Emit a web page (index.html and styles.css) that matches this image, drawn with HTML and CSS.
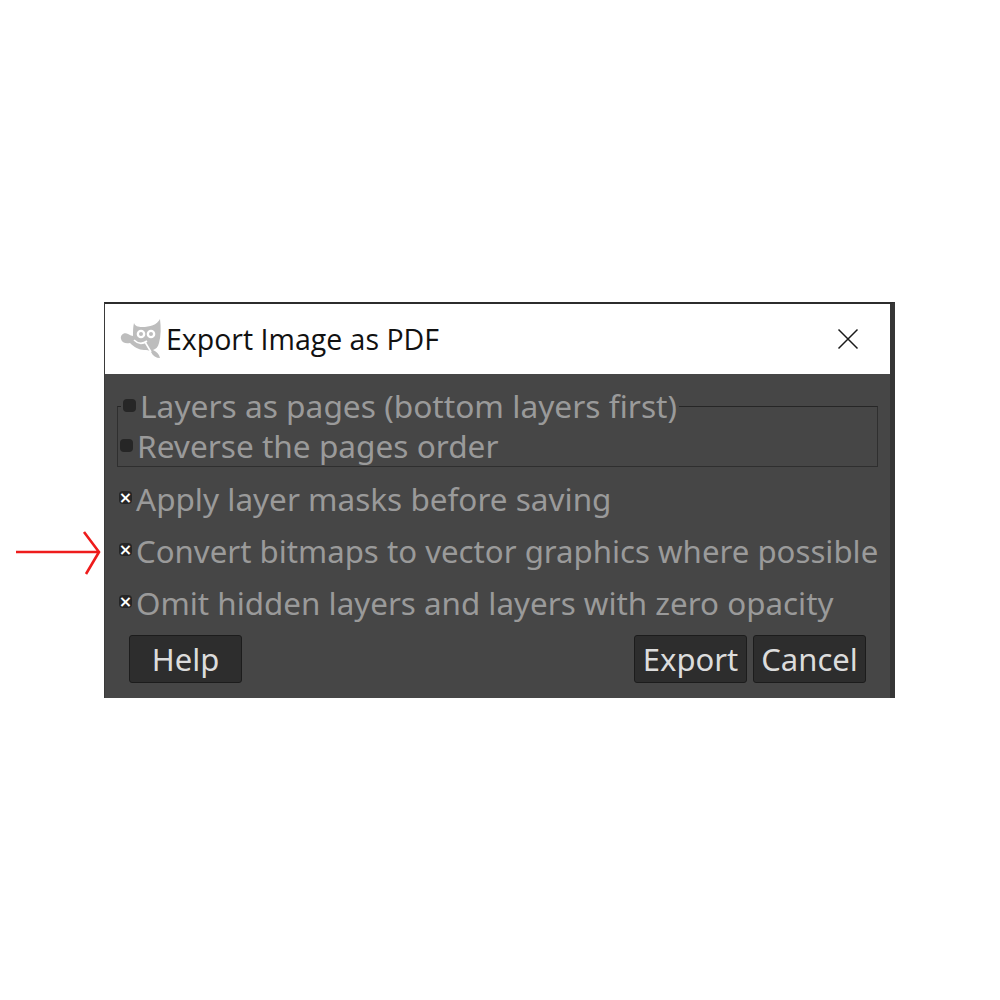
FILE: index.html
```html
<!DOCTYPE html>
<html lang="en">
<head>
<meta charset="utf-8">
<title>Export Image as PDF</title>
<link rel="stylesheet" href="styles.css">
</head>
<body>
<svg class="arrow" width="90" height="50" viewBox="0 0 90 50" aria-hidden="true">
  <path d="M1 25H84M69 5L84 25L71 47" fill="none" stroke="#ee1c1c" stroke-width="2.600"/>
</svg>
<main class="window">
  <header class="titlebar">
    <svg class="logo" width="42" height="40" viewBox="0 0 42 40" aria-hidden="true">
      <path fill="#bdbdbd" d="M14 4C15 7 18 8 22 8C30 8 37 6 40 0C41 8 41 17 39 24C38 28 36 30 33 31C37 33 39 35 40 39C36 39 33 37 31 33C29 31 27 31 24 31C19 31 14 28 10 24C6 25 2 24 1 20C0 16 4 13 8 15C10 16 12 17 13 17C13 12 13 8 14 4Z"/>
      <circle cx="21" cy="15" r="4.300" fill="#fff"/><circle cx="21" cy="15" r="2" fill="#bdbdbd"/>
      <circle cx="31" cy="15" r="4.300" fill="#fff"/><circle cx="31" cy="15" r="2" fill="#bdbdbd"/>
      <path d="M14 21C18 25 23 25 27 22M25 23L31 33" fill="none" stroke="#fff" stroke-width="1.600"/>
    </svg>
    <h1 class="title">Export Image as PDF</h1>
    <svg class="close" width="22" height="22" viewBox="0 0 22 22" aria-hidden="true">
      <path d="M1.500 1.500L20.500 20.500M20.500 1.500L1.500 20.500" fill="none" stroke="#1a1a1a" stroke-width="1.500"/>
    </svg>
  </header>
  <div class="content">
    <fieldset class="group">
      <legend class="option legend"><span class="check"></span><span>Layers as pages (bottom layers first)</span></legend>
      <div class="option nested"><span class="check"></span><span>Reverse the pages order</span></div>
    </fieldset>
    <div class="option plain apply"><span class="check on"></span><span>Apply layer masks before saving</span></div>
    <div class="option plain convert"><span class="check on"></span><span>Convert bitmaps to vector graphics where possible</span></div>
    <div class="option plain omit"><span class="check on"></span><span>Omit hidden layers and layers with zero opacity</span></div>
    <div class="actions">
      <button class="btn">Help</button>
      <div class="spacer"></div>
      <button class="btn">Export</button>
      <button class="btn">Cancel</button>
    </div>
  </div>
</main>
</body>
</html>
```
FILE: styles.css
```css
* { box-sizing: border-box; }
html, body { margin: 0; height: 100%; background: #fff; }
body { position: relative; padding: 302px 0 0 104px; font-family: "Noto Sans", sans-serif; }
.arrow { position: absolute; left: 15px; top: 527px; }
.window {
  width: 791px; height: 396px;
  background: #464646;
  border-top: 2px solid #2c2c2c;
  border-left: 1px solid #3a3a3a;
  border-right: 5px solid #363636;
  display: flex; flex-direction: column;
}
.titlebar {
  height: 70px; background: #fff;
  display: flex; align-items: center;
  padding: 0 31px 0 15px;
}
.logo { flex: none; margin-top: -1px; }
.title {
  margin: 0 0 0 4px; flex: 1;
  font: 400 28.500px "Open Sans", "Noto Sans", sans-serif;
  color: #111;
}
.close { flex: none; }
.content { flex: 1; padding: 12px 12px 0 12px; display: flex; flex-direction: column; }
.group {
  margin: 0; padding: 0 0 0 2px;
  height: 81px;
  border: 1px solid #2f2f2f;
  border-top-color: #262626;
  min-width: 0;
}
.option {
  display: flex; align-items: center;
  font-size: 31.600px; line-height: 40px; height: 40px;
  color: #9a9a9a;
  white-space: nowrap;
}
.legend { padding: 0 2px; margin-left: 1px; font-size: 31.700px; }
.check {
  flex: none; width: 13px; height: 13px; margin-right: 4px;
  border-radius: 4px; background: #262626;
  display: flex; align-items: center; justify-content: center;
  margin-top: -1px;
}
.check.on { margin-top: -3px; }
.check.on::after {
  content: "×"; color: #fff; font: 700 16px/13px "DejaVu Sans", sans-serif;
}
.plain { margin-left: 2px; font-size: 31.500px; }
.apply { margin-top: 12px; }
.convert { margin-top: 12px; font-size: 31.200px; }
.omit { margin-top: 12px; font-size: 31.350px; }
.actions { display: flex; gap: 6px; margin: 12px 12px 0 12px; }
.spacer { flex: 1; }
.btn {
  width: 113px; height: 48px; padding: 0;
  background: #2d2d2d; color: #dcdcdc;
  border: 1px solid #1c1c1c; border-radius: 3px;
  font: 400 31px "Noto Sans", sans-serif;
}
```
